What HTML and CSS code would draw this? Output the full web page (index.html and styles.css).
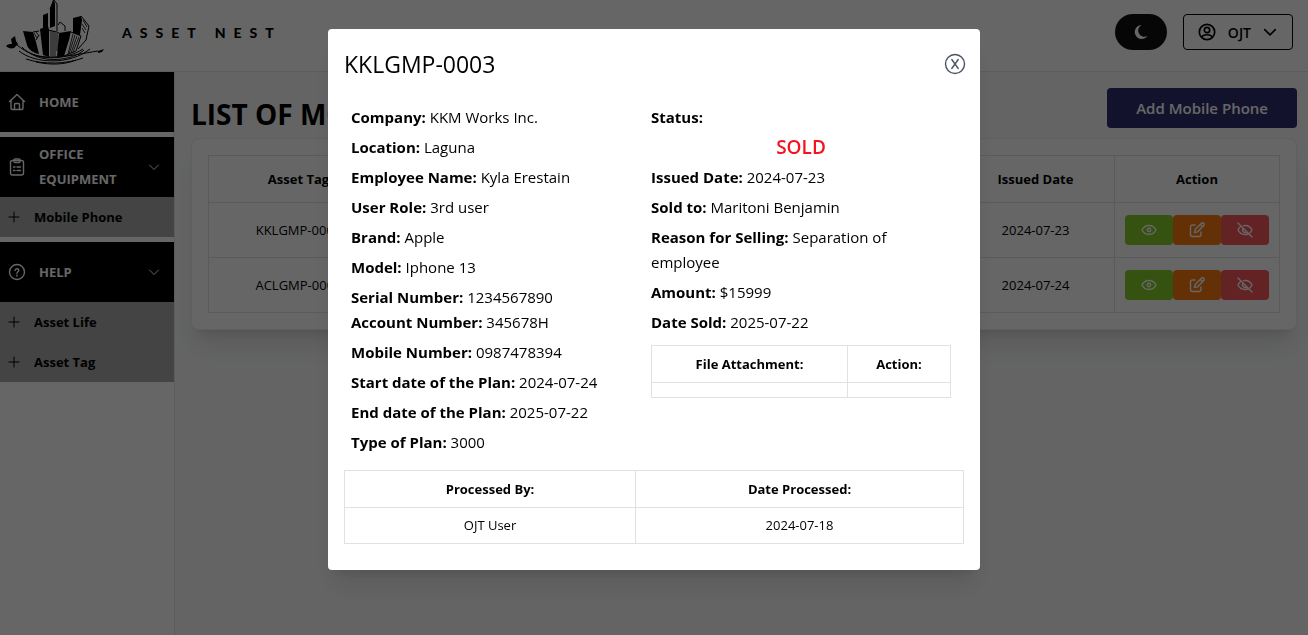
FILE: index.html
```html
<!DOCTYPE html>
<html lang="en">
<head>
<meta charset="utf-8">
<title>Asset Nest</title>
<link rel="stylesheet" href="styles.css">
</head>
<body>
<svg class="sprite" aria-hidden="true">
  <symbol id="plus" viewBox="0 0 12 12"><path d="M6 1v10M1 6h10"/></symbol>
  <symbol id="chevron" viewBox="0 0 12 12"><path d="M1.500 4 6 8.500 10.500 4"/></symbol>
  <symbol id="eye" viewBox="0 0 16 16"><path d="M1 8c1.500-3 4-4.500 7-4.500S13.500 5 15 8c-1.500 3-4 4.500-7 4.500S2.500 11 1 8z"/><circle cx="8" cy="8" r="1.700"/></symbol>
  <symbol id="edit" viewBox="0 0 16 16"><path d="M6 3H3.500A2 2 0 0 0 1.500 5v7.500a2 2 0 0 0 2 2H10a2 2 0 0 0 2-2V10M5.500 10.500l.6-2.900 6.400-6.300a1.500 1.500 0 0 1 2.200 2.200L8.400 9.900zM11.400 2.600l2.200 2.200"/></symbol>
  <symbol id="eye-off" viewBox="0 0 16 16"><path d="M1 1l14 14M4 4C2.800 4.900 1.700 6.200 1 8c1.400 3 4 4.500 7 4.500 1.100 0 2-.2 2.900-.5M6.500 3.600C10.500 2.900 13.500 4.800 15 8a9 9 0 0 1-2 2.700M6.300 6.300a2.400 2.400 0 0 0 3.400 3.400"/></symbol>
</svg>

<header class="topbar">
  <a class="brand" href="#">
    <svg class="brand-mark" viewBox="6 0 99 65" aria-hidden="true">
      <g fill="#000">
        <path d="M23 31l10 1 3 10 3 12c-6-1-11-5-12-9z"/>
        <path d="M43 15l5-2v14l-5 2zM40 29l8-3 1 4v27l-6-2z"/>
        <path d="M50 9l3-9 2 3v23l-5 2z"/>
        <path d="M59 33l12-2-2 9-5 16-7 1z"/>
        <path d="M73 18l8-2 1 4-2 15-7-2z"/>
        <path d="M12 44l-1-5 4-3 1 5 2 3-4 4c-3 1-6 0-8-2 2-2 4-2 6-2zM98 51l6-2-2 3-4 1z"/>
      </g>
      <g fill="none" stroke="#000" stroke-linejoin="round">
        <path d="M33 32l6-1M36 40l3-5M50 9l4-9 3 4v27M48 30l9 2 2 1M58 25l2-3 5 4v5M81 16l8 10-3 14-8 9M71 32l10 4-5 15-12 5"/>
        <path stroke-width=".8" d="M51 31v25M53 31v25M55 32v24M57 33v18M73 34l-5 20M75 35l-6 19M77 36l-6 17M79 37l-6 15M83 20l4 7M82 24l4 6M82 28l3 5M34 33l3 5M36 32l3 4"/>
        <path d="M17 45c10 8 19 12 33 12 19 0 34-4 48-6M22 47c12 14 43 14 61 2M19 51c16 13 51 14 71-2M30 53c14 10 42 8 54-3M26 59c18 6 41 5 57-1M36 62c14 3 28 3 40-2"/>
      </g>
    </svg>
    <span class="brand-name">ASSET NEST</span>
  </a>
  <div class="topbar-tools">
    <button class="theme-button" type="button" aria-label="Dark mode"><svg width="16" height="16" viewBox="0 0 16 16" aria-hidden="true"><path fill="#fff" d="M8.500 1A7 7 0 1 0 14.500 12 6 6 0 0 1 8.500 1z"/></svg></button>
    <button class="user-button" type="button">
      <svg class="icon user-icon" viewBox="0 0 18 18" aria-hidden="true"><circle cx="9" cy="9" r="7.700"/><circle cx="9" cy="7" r="2.700"/><path d="M4 14c1-3 9-3 10 0"/></svg>
      <span>OJT</span>
      <svg class="icon user-chevron" aria-hidden="true"><use href="#chevron"/></svg>
    </button>
  </div>
</header>

<div class="shell">
  <nav class="sidebar">
    <a class="nav-item" href="#">
      <svg class="icon nav-icon" viewBox="0 0 18 18" aria-hidden="true"><path d="M1.500 8.500 9 1.500l7.500 7M3 7.500V15a1.500 1.500 0 0 0 1.500 1.500h9A1.500 1.500 0 0 0 15 15V7.500M6.500 16v-4.500a1 1 0 0 1 1-1h3a1 1 0 0 1 1 1V16"/></svg>
      <span>HOME</span>
    </a>
    <div class="nav-group">
      <button class="nav-item" type="button">
        <svg class="icon nav-icon" viewBox="0 0 18 18" aria-hidden="true"><rect x="2.500" y="2.500" width="13" height="14.500" rx="2"/><rect x="6" y="1" width="6" height="3.500" rx="1"/><path d="M5.500 9H7M9 9h3.500M5.500 12.500H7M9 12.500h3.500"/></svg>
        <span>OFFICE EQUIPMENT</span>
        <svg class="icon nav-chevron" aria-hidden="true"><use href="#chevron"/></svg>
      </button>
      <a class="sub-item" href="#"><svg class="icon plus" aria-hidden="true"><use href="#plus"/></svg>Mobile Phone</a>
    </div>
    <div class="nav-group">
      <button class="nav-item" type="button">
        <svg class="icon nav-icon" viewBox="0 0 18 18" aria-hidden="true"><circle cx="9" cy="9" r="7.500"/><path d="M7.200 7.500c0-2.300 3.600-2.200 3.600 0 0 1.300-1.800 1.300-1.800 2.700M9 12v1"/></svg>
        <span>HELP</span>
        <svg class="icon nav-chevron" aria-hidden="true"><use href="#chevron"/></svg>
      </button>
      <a class="sub-item" href="#"><svg class="icon plus" aria-hidden="true"><use href="#plus"/></svg>Asset Life</a>
      <a class="sub-item" href="#"><svg class="icon plus" aria-hidden="true"><use href="#plus"/></svg>Asset Tag</a>
    </div>
  </nav>

  <main class="content">
    <div class="page-head">
      <h1>LIST OF MOBILE PHONE</h1>
      <button class="add-button" type="button">Add Mobile Phone</button>
    </div>
    <section class="card">
      <table class="list">
        <colgroup><col class="col-tag"><col><col class="col-date"><col class="col-action"></colgroup>
        <thead><tr><th>Asset Tag</th><th></th><th>Issued Date</th><th>Action</th></tr></thead>
        <tbody>
          <tr>
            <td>KKLGMP-0003</td><td></td><td>2024-07-23</td>
            <td><div class="actions">
              <button class="act view" type="button" aria-label="View"><svg class="icon" aria-hidden="true"><use href="#eye"/></svg></button>
              <button class="act edit" type="button" aria-label="Edit"><svg class="icon" aria-hidden="true"><use href="#edit"/></svg></button>
              <button class="act hide" type="button" aria-label="Hide"><svg class="icon" aria-hidden="true"><use href="#eye-off"/></svg></button>
            </div></td>
          </tr>
          <tr>
            <td>ACLGMP-0002</td><td></td><td>2024-07-24</td>
            <td><div class="actions">
              <button class="act view" type="button" aria-label="View"><svg class="icon" aria-hidden="true"><use href="#eye"/></svg></button>
              <button class="act edit" type="button" aria-label="Edit"><svg class="icon" aria-hidden="true"><use href="#edit"/></svg></button>
              <button class="act hide" type="button" aria-label="Hide"><svg class="icon" aria-hidden="true"><use href="#eye-off"/></svg></button>
            </div></td>
          </tr>
        </tbody>
      </table>
    </section>
  </main>
</div>

<div class="overlay">
  <section class="modal" role="dialog" aria-modal="true" aria-labelledby="modal-title">
    <div class="modal-head">
      <h2 id="modal-title">KKLGMP-0003</h2>
      <button class="close-button" type="button" aria-label="Close"><svg class="icon" viewBox="0 0 22 22" aria-hidden="true"><circle cx="11" cy="11" r="9.500"/><path d="M7.800 6.500l6.400 9M14.200 6.500l-6.400 9"/></svg></button>
    </div>
    <div class="details">
      <div class="fields">
        <p><b>Company:</b> KKM Works Inc.</p>
        <p><b>Location:</b> Laguna</p>
        <p><b>Employee Name:</b> Kyla Erestain</p>
        <p><b>User Role:</b> 3rd user</p>
        <p><b>Brand:</b> Apple</p>
        <p><b>Model:</b> Iphone 13</p>
        <p><b>Serial Number:</b> 1234567890<br><b>Account Number:</b> 345678H</p>
        <p><b>Mobile Number:</b> 0987478394</p>
        <p><b>Start date of the Plan:</b> 2024-07-24</p>
        <p><b>End date of the Plan:</b> 2025-07-22</p>
        <p><b>Type of Plan:</b> 3000</p>
      </div>
      <div class="fields">
        <p><b>Status:</b></p>
        <p class="status">SOLD</p>
        <p><b>Issued Date:</b> 2024-07-23</p>
        <p><b>Sold to:</b> Maritoni Benjamin</p>
        <p><b>Reason for Selling:</b> Separation of employee</p>
        <p><b>Amount:</b> $15999</p>
        <p><b>Date Sold:</b> 2025-07-22</p>
        <table class="grid files">
          <colgroup><col><col class="col-file-action"></colgroup>
          <thead><tr><th>File Attachment:</th><th>Action:</th></tr></thead>
          <tbody><tr><td></td><td></td></tr></tbody>
        </table>
      </div>
    </div>
    <table class="grid">
      <colgroup><col class="col-by"><col></colgroup>
      <thead><tr><th>Processed By:</th><th>Date Processed:</th></tr></thead>
      <tbody><tr><td>OJT User</td><td>2024-07-18</td></tr></tbody>
    </table>
  </section>
</div>
</body>
</html>
```

FILE: styles.css
```css
* { box-sizing: border-box; }

body {
  margin: 0;
  min-height: 100vh;
  display: flex;
  flex-direction: column;
  background: #f9fafb;
  color: #000;
  font-family: "Open Sans", "Noto Sans", sans-serif;
  font-size: 15px;
  line-height: 25px;
}

h1, h2, p { margin: 0; }
button { margin: 0; padding: 0; border: 0; font: inherit; color: inherit; cursor: pointer; }
a { color: inherit; text-decoration: none; }
table { width: 100%; border-collapse: collapse; table-layout: fixed; font-size: 13px; }

.sprite { display: none; }
.icon { display: block; flex: none; fill: none; stroke: currentColor; stroke-width: 1.4; stroke-linecap: round; stroke-linejoin: round; }

.topbar {
  display: flex;
  justify-content: space-between;
  align-items: flex-start;
  height: 72px;
  padding: 0 15px 0 6px;
  background: #fff;
  border-bottom: 1px solid #e2e6ea;
}
.brand { display: flex; align-items: center; gap: 17px; }
.brand-mark { width: 99px; height: 65px; }
.brand-name {
  font-family: Lato, sans-serif;
  font-size: 14px;
  font-weight: 900;
  letter-spacing: 8px;
}
.topbar-tools { display: flex; gap: 16px; padding-top: 14px; }
.theme-button {
  display: flex;
  align-items: center;
  justify-content: center;
  width: 52px;
  height: 36px;
  border-radius: 18px;
  background: #111;
}
.user-button {
  display: flex;
  align-items: center;
  gap: 12px;
  height: 36px;
  padding: 0 15px 0 14px;
  border: 1px solid #000;
  border-radius: 4px;
  background: transparent;
  font-size: 14px;
  font-weight: 600;
}
.user-icon { width: 18px; height: 18px; stroke-width: 1.7; }
.user-chevron { width: 14px; height: 14px; }

.shell { flex: 1; display: flex; }

.sidebar {
  flex: none;
  display: flex;
  flex-direction: column;
  gap: 5px;
  width: 175px;
  background: #fff;
  border-right: 1px solid #e5e7eb;
}
.nav-item {
  display: flex;
  align-items: center;
  width: 100%;
  height: 60px;
  padding: 0 14px 0 8px;
  background: #000;
  color: #fff;
  font-size: 13px;
  font-weight: 700;
  text-align: left;
}
.nav-item span { flex: 1; padding-left: 13px; }
.nav-icon { width: 18px; height: 18px; }
.nav-chevron { width: 12px; height: 12px; stroke-width: 1; }
.sub-item {
  display: flex;
  align-items: center;
  gap: 14px;
  height: 40px;
  padding-left: 8px;
  background: #aaa;
  font-size: 13px;
  font-weight: 700;
}
.plus { width: 12px; height: 12px; stroke-width: 1; }

.content { flex: 1; min-width: 0; padding: 16px 11px 16px 16px; }
.page-head { display: flex; justify-content: space-between; height: 50px; }
.page-head h1 { font-size: 28px; line-height: 52px; font-weight: 700; }
.add-button {
  height: 40px;
  padding: 0 29px;
  border-radius: 4px;
  background: #312e6e;
  color: #fff;
  font-weight: 600;
}
.card {
  padding: 16px;
  border: 1px solid #eceef1;
  border-radius: 8px;
  background: #fff;
  box-shadow: 0 20px 25px -5px rgba(0, 0, 0, .1), 0 8px 10px -6px rgba(0, 0, 0, .1);
}
.list th, .list td { height: 55px; padding: 0 10px; border: 1px solid #e2e2e2; text-align: center; }
.list th { height: 47px; }
.col-tag { width: 180px; }
.col-date { width: 158px; }
.col-action { width: 165px; }
.actions { display: flex; }
.act {
  display: flex;
  align-items: center;
  justify-content: center;
  width: 48px;
  height: 30px;
  border-radius: 4px;
  color: #fff;
}
.act .icon { width: 16px; height: 16px; }
.view { background: #87cd28; }
.edit { background: #fb7c12; }
.hide { background: #f8555a; }

.overlay {
  position: fixed;
  inset: 0;
  padding: 29px 16px;
  background: rgba(0, 0, 0, .6);
}
.modal {
  max-width: 652px;
  margin: 0 auto;
  padding: 16px 16px 26px;
  border-radius: 4px;
  background: #fff;
  box-shadow: 0 20px 25px -5px rgba(0, 0, 0, .1), 0 8px 10px -6px rgba(0, 0, 0, .1);
}
.modal-head {
  display: flex;
  justify-content: space-between;
  align-items: center;
  height: 38px;
  margin-bottom: 22px;
}
.modal-head h2 { font-size: 23px; font-weight: 400; }
.close-button { width: 22px; height: 22px; margin-right: -2px; background: transparent; color: #4b5563; }
.details { display: grid; grid-template-columns: 1fr 1fr; padding: 0 13px 15px 7px; }
.fields { display: flex; flex-direction: column; gap: 5px; }
.status { color: #f5131f; font-size: 19px; font-weight: 600; text-align: center; }
.grid th, .grid td { height: 37px; padding: 0 8px; border: 1px solid #dee2e6; text-align: center; }
.files { margin-top: 5px; }
.grid.files td { height: 15px; }
.col-file-action { width: 103px; }
.col-by { width: 291px; }
.grid td { height: 36px; }
```
